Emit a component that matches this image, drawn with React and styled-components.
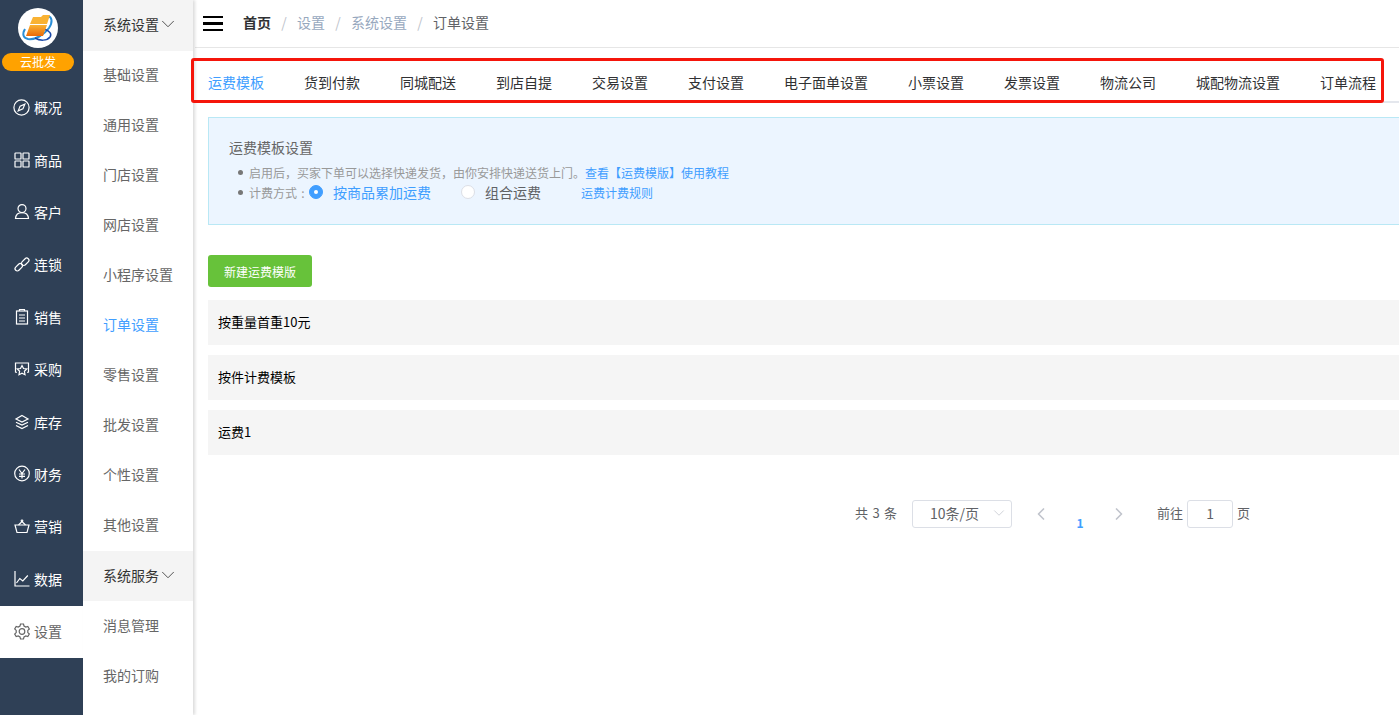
import styled, { createGlobalStyle } from 'styled-components';
import { ChevronDown, ChevronLeft, ChevronRight } from 'lucide-react';

const GlobalStyle = createGlobalStyle`
    html, body {
        margin: 0;
        padding: 0;
        height: 100%;
        overflow: hidden;
        background: #fff;
        font-family: "Noto Sans CJK SC", "Liberation Sans", sans-serif;
    }
    * {
        box-sizing: border-box;
    }
`;

const Page = styled.div`
    display: flex;
    width: 1399px;
    height: 715px;
    overflow: hidden;
`;

const Rail = styled.nav`
    width: 83px;
    flex-shrink: 0;
    background: #2f4056;
`;

const Brand = styled.div`
    height: 82px;
    padding: 8px 7px 0 0;
    display: flex;
    flex-direction: column;
    align-items: center;
    gap: 5px;
`;

const Badge = styled.div`
    width: 72px;
    height: 18px;
    border-radius: 9px;
    background: #ffa200;
    color: #fff;
    font-size: 12px;
    line-height: 18px;
    text-align: center;
`;

const RailItem = styled.div`
    height: 52.4px;
    display: flex;
    align-items: center;
    gap: 4px;
    padding: 0 0 2px 13px;
    font-size: 14px;
    color: ${(props) => (props.$active ? '#666' : '#fff')};
    background: ${(props) => (props.$active ? '#fff' : 'transparent')};

    svg {
        width: 17px;
        height: 17px;
        flex-shrink: 0;
        fill: none;
        stroke: currentColor;
        stroke-width: 1.2;
    }
`;

const SubMenu = styled.aside`
    width: 110px;
    flex-shrink: 0;
    background: #fff;
    box-shadow: 2px 0 3px rgba(0, 0, 0, 0.14);
    position: relative;
`;

const SubHeader = styled.div`
    height: 50.5px;
    display: flex;
    align-items: center;
    padding: 0 0 2px 20px;
    background: #f4f4f4;
    color: #333;
    font-size: 14px;

    svg {
        margin-left: -2px;
    }
`;

const SubItem = styled.div`
    height: 50px;
    display: flex;
    align-items: center;
    padding: 0 0 3px 20px;
    font-size: 14px;
    color: ${(props) => (props.$active ? '#409eff' : '#666')};
`;

const Main = styled.main`
    flex: 1;
    min-width: 0;
    margin-left: 2px;
`;

const TopBar = styled.header`
    height: 48px;
    display: flex;
    align-items: center;
    gap: 20px;
    padding-left: 8px;
    border-bottom: 1px solid #e6e6e6;
`;

const Burger = styled.div`
    width: 20px;
    height: 15px;
    display: flex;
    flex-direction: column;
    justify-content: space-between;

    span {
        display: block;
        height: 2.4px;
        background: #000;
    }
`;

const Crumbs = styled.div`
    display: flex;
    align-items: center;
    margin-top: -4px;
    font-size: 14px;
`;

const Crumb = styled.span`
    color: ${(props) => props.$color};
    font-weight: ${(props) => (props.$bold ? 700 : 400)};
`;

const Slash = styled.span`
    width: 26px;
    text-align: center;
    color: #c0c4cc;
`;

const TabsBar = styled.div`
    position: relative;
    margin-top: 15px;
    height: 40px;
    display: flex;
    gap: 40px;
    padding-left: 13px;
    border-bottom: 2px solid #e4e7ed;
`;

const Tab = styled.div`
    flex-shrink: 0;
    font-size: 14px;
    line-height: 38px;
    color: ${(props) => (props.$active ? '#409eff' : '#303133')};
`;

const RedFrame = styled.div`
    position: absolute;
    left: -4px;
    top: -5px;
    width: 1193px;
    height: 45px;
    border: 3px solid #f5150b;
    border-radius: 3px;
    pointer-events: none;
`;

const Content = styled.section`
    padding: 14px 0 0 13px;
`;

const Notice = styled.div`
    height: 108px;
    margin-right: -10px;
    padding: 19px 20px 0;
    background: #ecf5ff;
    border: 1px solid #b9e8f5;
`;

const NoticeTitle = styled.div`
    font-size: 14px;
    line-height: 20px;
    color: #666;
`;

const NoticeLine = styled.div`
    display: flex;
    align-items: center;
    height: 20px;
    margin-top: ${(props) => props.$top || 0}px;
    padding-left: 9px;
    font-size: 12px;
    color: #999;

    &::before {
        content: '';
        width: 5px;
        height: 5px;
        margin-right: 6px;
        border-radius: 50%;
        background: #777;
    }
`;

const Colon = styled.span`
    width: 12px;
    text-align: center;
`;

const TextLink = styled.span`
    color: #409eff;
    font-size: 12px;
    margin-left: ${(props) => props.$left || 0}px;
`;

const Radio = styled.span`
    width: 14px;
    height: 14px;
    margin-left: ${(props) => props.$left || 0}px;
    border-radius: 50%;
    display: inline-flex;
    align-items: center;
    justify-content: center;
    background: ${(props) => (props.$on ? '#409eff' : '#fff')};
    border: 1px solid ${(props) => (props.$on ? '#409eff' : '#dcdfe6')};

    &::after {
        content: '';
        width: 4px;
        height: 4px;
        border-radius: 50%;
        background: #fff;
    }
`;

const RadioText = styled.span`
    margin-left: 10px;
    font-size: 14px;
    color: ${(props) => (props.$on ? '#409eff' : '#606266')};
`;

const GreenButton = styled.button`
    display: block;
    width: 104px;
    height: 32px;
    margin-top: 30px;
    padding: 0;
    border: none;
    border-radius: 3px;
    background: #67c23a;
    color: #fff;
    font-family: inherit;
    font-size: 12px;
`;

const TemplateList = styled.div`
    display: flex;
    flex-direction: column;
    gap: 10px;
    margin-top: 13px;
`;

const TemplateRow = styled.div`
    height: 45px;
    display: flex;
    align-items: center;
    padding: 0 0 3px 10px;
    background: #f5f5f5;
    font-size: 13px;
    color: #000;
`;

const Pager = styled.div`
    display: flex;
    align-items: center;
    height: 28px;
    margin-top: 45px;
    padding-left: 647px;
    font-size: 13px;
    word-spacing: 1.5px;
    color: #606266;
`;

const PagerLabel = styled.span`
    margin-top: -3px;
`;

const PageSize = styled.div`
    width: 100px;
    height: 28px;
    margin-left: 15px;
    padding: 0 3px 2px 17px;
    display: flex;
    align-items: center;
    justify-content: space-between;
    border: 1px solid #dcdfe6;
    border-radius: 3px;
    font-size: 14px;
`;

const PagerArrows = styled.div`
    width: 98px;
    margin: 0 28px 0 19px;
    display: flex;
    align-items: center;
    justify-content: space-between;
    color: #c0c4cc;
`;

const PageNumber = styled.span`
    position: relative;
    top: 8px;
    color: #409eff;
    font-size: 12px;
    font-weight: 700;
`;

const PageInput = styled.div`
    width: 46px;
    height: 28px;
    margin: 0 4px;
    border: 1px solid #dcdfe6;
    border-radius: 3px;
    font-size: 14px;
    text-align: center;
    line-height: 24px;
`;

const railIcons = {
    compass: (
        <>
            <circle cx="8.5" cy="8.5" r="7.6" />
            <path d="M11.8 5.2 9.9 9.9 5.2 11.8 7.1 7.1z" />
        </>
    ),
    grid: (
        <>
            <rect x="2" y="2" width="6" height="6" rx=".6" />
            <rect x="10" y="2" width="6" height="6" rx=".6" />
            <rect x="2" y="10" width="6" height="6" rx=".6" />
            <rect x="10" y="10" width="6" height="6" rx=".6" />
        </>
    ),
    user: (
        <>
            <circle cx="9" cy="5.6" r="4" />
            <path d="M2.500 15.500c.3-3.600 3-5.900 6.500-5.900s6.200 2.300 6.500 5.900z" />
        </>
    ),
    link: (
        <>
            <rect x="1.500" y="9" width="8.500" height="4.500" rx="2.200" transform="rotate(-45 5.750 11.250)" />
            <rect x="8" y="3.500" width="8.500" height="4.500" rx="2.200" transform="rotate(-45 12.250 5.750)" />
        </>
    ),
    clipboard: (
        <>
            <rect x="3.500" y="3" width="11" height="13" />
            <path d="M6.500 3V1.500h5V3M6 7h6M6 10h6M6 13h6" />
        </>
    ),
    star: (
        <>
            <path d="M3.800 11.500 2.500 11V2h13v9l-1.300.5" />
            <path d="m9 4.500 1.500 3 3.300.5-2.400 2.300.6 3.400L9 12.100l-3 1.600.6-3.400L4.200 8l3.300-.5z" />
        </>
    ),
    layers: (
        <>
            <path d="M9 2.500 15 6l-6 3L3 6z" />
            <path d="M3 9.200 9 12l6-2.800M3 12.500 9 15.500l6-3" />
        </>
    ),
    yen: (
        <>
            <circle cx="9" cy="8.500" r="7.300" />
            <path d="M6 4.500l3 4 3-4M9 8.500v5M6 9h6M6 11.300h6" />
        </>
    ),
    basket: (
        <>
            <path d="M2 7h14l-2 7.500H4z" />
            <path d="M5.500 7 9 3.500 12.500 7" />
            <circle cx="9" cy="2.800" r=".8" />
        </>
    ),
    chart: (
        <>
            <path d="M2 1v15h14.500" />
            <path d="m3.500 13 3.300-4.500 3 2.500 5-5.500" />
        </>
    ),
    gear: (
        <>
            <circle cx="9" cy="8.500" r="2.800" />
            <path d="m7.500 1 3 0 .5 2 1.800 1 2-.6 1.500 2.600-1.500 1.400v2.200l1.500 1.400-1.500 2.600-2-.6-1.800 1-.5 2h-3l-.5-2-1.800-1-2 .6-1.500-2.600 1.500-1.400V7.400L1.700 6l1.500-2.600 2 .6 1.800-1z" />
        </>
    ),
};

const railItems = [
    ['compass', '概况'],
    ['grid', '商品'],
    ['user', '客户'],
    ['link', '连锁'],
    ['clipboard', '销售'],
    ['star', '采购'],
    ['layers', '库存'],
    ['yen', '财务'],
    ['basket', '营销'],
    ['chart', '数据'],
    ['gear', '设置'],
];

const settingItems = [
    '基础设置',
    '通用设置',
    '门店设置',
    '网店设置',
    '小程序设置',
    '订单设置',
    '零售设置',
    '批发设置',
    '个性设置',
    '其他设置',
];

const tabs = [
    '运费模板',
    '货到付款',
    '同城配送',
    '到店自提',
    '交易设置',
    '支付设置',
    '电子面单设置',
    '小票设置',
    '发票设置',
    '物流公司',
    '城配物流设置',
    '订单流程',
];

const templates = ['按重量首重10元', '按件计费模板', '运费1'];

function Logo() {
    return (
        <svg width="40" height="40" viewBox="0 0 40 40">
            <defs>
                <linearGradient id="folder" x1="0" y1="0" x2="0" y2="1">
                    <stop offset="0" stopColor="#f9b233" />
                    <stop offset="1" stopColor="#ea6a0a" />
                </linearGradient>
            </defs>
            <circle cx="20" cy="20" r="20" fill="#fff" />
            <path d="M30 8c4 1 5 6 1 12-5 7-14 12-21 11-5-1-6-5-3-10" fill="none" stroke="#2a8fd8" strokeWidth="2" />
            <path d="M26 21c6 2 8 5 6 8-3 4-10 4-15 1" fill="none" stroke="#1c4aa8" strokeWidth="1.500" />
            <path d="M15 9h8l2-2h7l-3 9H12z" fill="#f9b233" />
            <path d="M12 17h17l-4 11H8z" fill="url(#folder)" />
        </svg>
    );
}

function App() {
    return (
        <>
            <GlobalStyle />
            <Page>
                <Rail>
                    <Brand>
                        <Logo />
                        <Badge>云批发</Badge>
                    </Brand>
                    {railItems.map(([icon, label]) => (
                        <RailItem key={label} $active={label === '设置'}>
                            <svg viewBox="0 0 17 17">{railIcons[icon]}</svg>
                            {label}
                        </RailItem>
                    ))}
                </Rail>
                <SubMenu>
                    <SubHeader>
                        系统设置
                        <ChevronDown size={22} strokeWidth={0.9} />
                    </SubHeader>
                    {settingItems.map((item) => (
                        <SubItem key={item} $active={item === '订单设置'}>
                            {item}
                        </SubItem>
                    ))}
                    <SubHeader>
                        系统服务
                        <ChevronDown size={22} strokeWidth={0.9} />
                    </SubHeader>
                    <SubItem>消息管理</SubItem>
                    <SubItem>我的订购</SubItem>
                </SubMenu>
                <Main>
                    <TopBar>
                        <Burger>
                            <span />
                            <span />
                            <span />
                        </Burger>
                        <Crumbs>
                            <Crumb $bold $color="#303133">首页</Crumb>
                            <Slash>/</Slash>
                            <Crumb $color="#97a8be">设置</Crumb>
                            <Slash>/</Slash>
                            <Crumb $color="#97a8be">系统设置</Crumb>
                            <Slash>/</Slash>
                            <Crumb $color="#606266">订单设置</Crumb>
                        </Crumbs>
                    </TopBar>
                    <TabsBar>
                        {tabs.map((tab) => (
                            <Tab key={tab} $active={tab === '运费模板'}>
                                {tab}
                            </Tab>
                        ))}
                        <RedFrame />
                    </TabsBar>
                    <Content>
                        <Notice>
                            <NoticeTitle>运费模板设置</NoticeTitle>
                            <NoticeLine $top={5}>
                                启用后，买家下单可以选择快递发货，由你安排快递送货上门。
                                <TextLink>查看【运费模版】使用教程</TextLink>
                            </NoticeLine>
                            <NoticeLine>
                                计费方式
                                <Colon>:</Colon>
                                <Radio $on />
                                <RadioText $on>按商品累加运费</RadioText>
                                <Radio $left={30} />
                                <RadioText>组合运费</RadioText>
                                <TextLink $left={40}>运费计费规则</TextLink>
                            </NoticeLine>
                        </Notice>
                        <GreenButton>新建运费模版</GreenButton>
                        <TemplateList>
                            {templates.map((name) => (
                                <TemplateRow key={name}>{name}</TemplateRow>
                            ))}
                        </TemplateList>
                        <Pager>
                            <PagerLabel>共 3 条</PagerLabel>
                            <PageSize>
                                10条/页
                                <ChevronDown size={18} strokeWidth={1} color="#c0c4cc" />
                            </PageSize>
                            <PagerArrows>
                                <ChevronLeft size={20} />
                                <PageNumber>1</PageNumber>
                                <ChevronRight size={20} />
                            </PagerArrows>
                            <PagerLabel>前往</PagerLabel>
                            <PageInput>1</PageInput>
                            <PagerLabel>页</PagerLabel>
                        </Pager>
                    </Content>
                </Main>
            </Page>
        </>
    );
}

export default App;
